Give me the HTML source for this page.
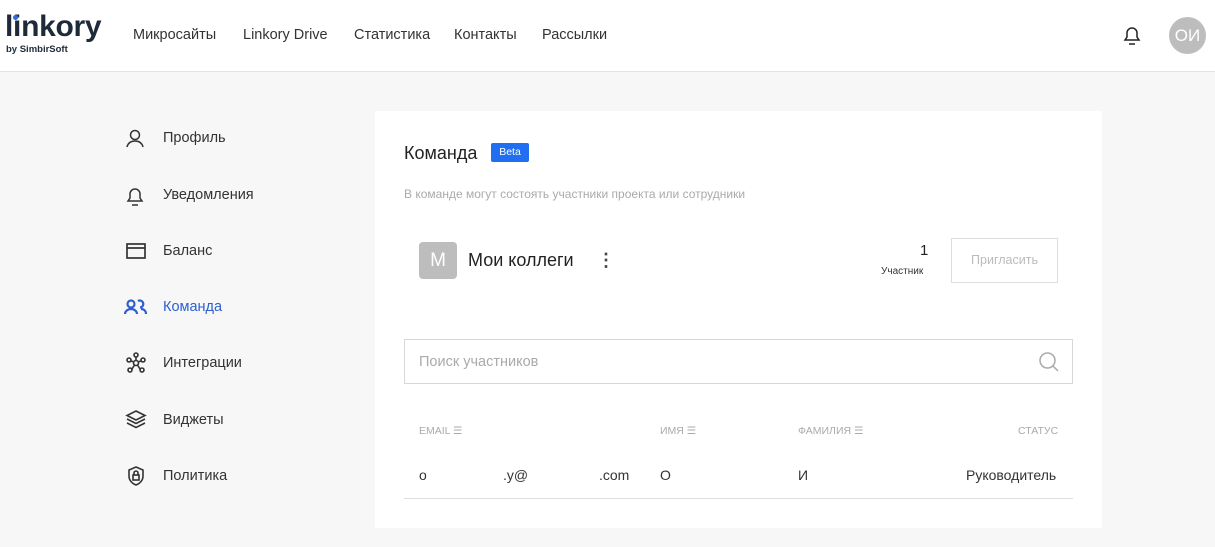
<!DOCTYPE html>
<html><head><meta charset="utf-8"><style>
*{box-sizing:border-box;margin:0;padding:0}
body{width:1215px;height:547px;overflow:hidden;background:#f7f7f7;font-family:"Liberation Sans",sans-serif;color:#222;position:relative}
.hdr{position:absolute;left:0;top:0;width:1215px;height:72px;background:#fff;border-bottom:1px solid #e2e2e2}
.a{position:absolute;white-space:nowrap}
.nav{font-size:14.5px;color:#333;top:27px}
.side{font-size:14.5px;color:#333;left:163px}
.card{position:absolute;left:375px;top:111px;width:727px;height:417px;background:#fff}
.th{font-size:10.5px;color:#aaa;top:425px}
.td{font-size:14px;color:#333;top:467px}
svg{position:absolute}
</style></head><body>
<div class="hdr"></div>
<div class="a" style="left:5px;top:10px;font-size:30px;font-weight:bold;color:#1e2a3a;letter-spacing:-0.3px">linkory</div>
<div style="position:absolute;left:13px;top:15px;width:5px;height:5px;border-radius:50%;background:#2d6be4"></div>
<div class="a" style="left:6px;top:44px;font-size:9.5px;color:#1e2a3a;font-weight:bold">by SimbirSoft</div>
<div class="a nav" style="left:133px">Микросайты</div>
<div class="a nav" style="left:243px">Linkory Drive</div>
<div class="a nav" style="left:354px">Статистика</div>
<div class="a nav" style="left:454px">Контакты</div>
<div class="a nav" style="left:542px">Рассылки</div>
<svg style="left:1122px;top:24px" width="20" height="22" viewBox="0 0 20 22" fill="none" stroke="#222" stroke-width="1.5"><path d="M3 16h14l-2-3V9a5 5 0 0 0-10 0v4z"/><path d="M7 20h6"/></svg>
<div style="position:absolute;left:1169px;top:17px;width:37px;height:37px;border-radius:50%;background:#bdbdbd;color:#fff;font-size:17px;text-align:center;line-height:37px">ОИ</div>

<svg style="left:125px;top:128px" width="20" height="20" viewBox="0 0 20 20" fill="none" stroke="#333" stroke-width="1.5"><circle cx="10" cy="7" r="4.5"/><path d="M2 19c1-4 4-6 8-6s7 2 8 6"/></svg>
<div class="a side" style="top:130px">Профиль</div>
<svg style="left:125px;top:185px" width="20" height="22" viewBox="0 0 20 22" fill="none" stroke="#333" stroke-width="1.5"><path d="M3 16h14l-2-3V9a5 5 0 0 0-10 0v4z"/><path d="M7 20h6"/></svg>
<div class="a side" style="top:187px">Уведомления</div>
<svg style="left:125px;top:242px" width="22" height="18" viewBox="0 0 22 18" fill="none" stroke="#333" stroke-width="1.7"><rect x="2" y="2" width="18" height="14"/><path d="M2 6h18"/></svg>
<div class="a side" style="top:243px">Баланс</div>
<svg style="left:124px;top:298px" width="24" height="18" viewBox="0 0 24 18" fill="none" stroke="#2d5fd3" stroke-width="2.2"><circle cx="7" cy="6" r="3.5"/><path d="M1 16c0-3 3-5 6-5s6 2 6 5"/><path d="M14 3a3.5 3.5 0 1 1 2 6.5M17 11c3 0 5 2 5 5"/></svg>
<div class="a side" style="top:299px;color:#2d5fd3">Команда</div>
<svg style="left:125px;top:352px" width="22" height="22" viewBox="0 0 22 22" fill="none" stroke="#333" stroke-width="1.6"><circle cx="11" cy="11" r="2.5"/><circle cx="11" cy="3" r="2"/><circle cx="4" cy="8" r="2"/><circle cx="18" cy="8" r="2"/><circle cx="5" cy="18" r="2"/><circle cx="17" cy="18" r="2"/><path d="M11 5v3.5M6 9l3 1M16 9l-3 1M7 17l2.5-4M15 17l-2.5-4"/></svg>
<div class="a side" style="top:355px">Интеграции</div>
<svg style="left:125px;top:409px" width="22" height="20" viewBox="0 0 22 20" fill="none" stroke="#333" stroke-width="1.6"><path d="M11 2l9 4.5-9 4.5-9-4.5z"/><path d="M2 10l9 4.5 9-4.5M2 14l9 4.5 9-4.5"/></svg>
<div class="a side" style="top:412px">Виджеты</div>
<svg style="left:126px;top:465px" width="20" height="22" viewBox="0 0 20 22" fill="none" stroke="#333" stroke-width="1.6"><path d="M10 2l7 3v6c0 5-4 8-7 9-3-1-7-4-7-9V5z"/><rect x="7" y="10" width="6" height="5"/><path d="M8 10V8a2 2 0 0 1 4 0v2"/></svg>
<div class="a side" style="top:468px">Политика</div>

<div class="card"></div>
<div class="a" style="left:404px;top:143px;font-size:18px;color:#222">Команда</div>
<div class="a" style="left:491px;top:143px;width:38px;height:19px;background:#1f6ff0;color:#fff;font-size:10.5px;text-align:center;line-height:19px;border-radius:2px">Beta</div>
<div class="a" style="left:404px;top:187px;font-size:12px;color:#aaa">В команде могут состоять участники проекта или сотрудники</div>
<div style="position:absolute;left:419px;top:242px;width:38px;height:37px;border-radius:4px;background:#bdbdbd;color:#fff;font-size:19px;text-align:center;line-height:37px">M</div>
<div class="a" style="left:468px;top:250px;font-size:18px;color:#222">Мои коллеги</div>
<div class="a" style="left:597px;top:250px;font-size:18px;color:#444;font-weight:bold">⋮</div>
<div class="a" style="left:920px;top:242px;font-size:15px;color:#222">1</div>
<div class="a" style="left:881px;top:266px;font-size:10px;color:#333">Участник</div>
<div style="position:absolute;left:951px;top:238px;width:107px;height:45px;border:1px solid #ddd;color:#bbb;font-size:12.5px;text-align:center;line-height:43px">Пригласить</div>
<div style="position:absolute;left:404px;top:339px;width:669px;height:45px;border:1px solid #d8d8d8"></div>
<div class="a" style="left:419px;top:354px;font-size:14.5px;color:#aaa">Поиск участников</div>
<svg style="left:1038px;top:351px" width="22" height="22" viewBox="0 0 22 22" fill="none" stroke="#aaa" stroke-width="1.5"><circle cx="9.5" cy="9.5" r="7.5"/><path d="M15 15l5 5"/></svg>
<div class="a th" style="left:419px">EMAIL ☰</div>
<div class="a th" style="left:660px">ИМЯ ☰</div>
<div class="a th" style="left:798px">ФАМИЛИЯ ☰</div>
<div class="a th" style="left:1018px">СТАТУС</div>
<div class="a td" style="left:419px">o</div>
<div class="a td" style="left:503px">.y@</div>
<div class="a td" style="left:599px">.com</div>
<div class="a td" style="left:660px">O</div>
<div class="a td" style="left:798px">И</div>
<div class="a td" style="left:966px">Руководитель</div>
<div style="position:absolute;left:404px;top:498px;width:669px;height:1px;background:#ddd"></div>
</body></html>
